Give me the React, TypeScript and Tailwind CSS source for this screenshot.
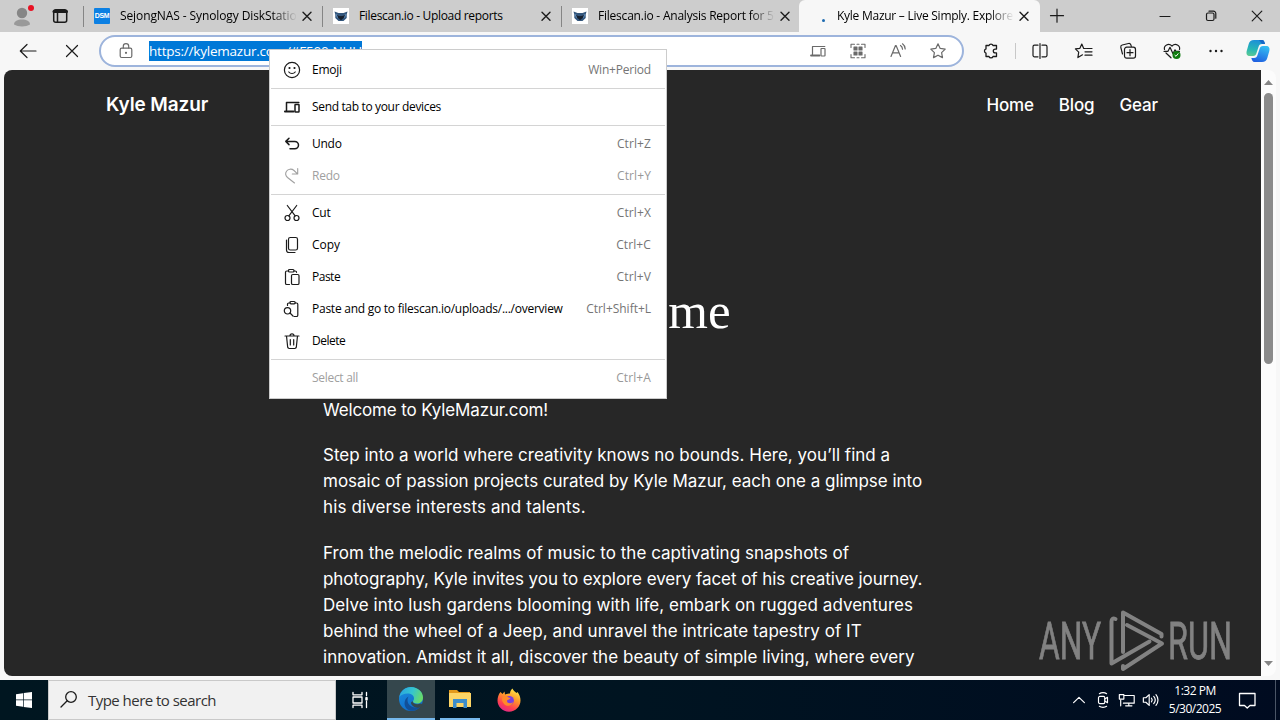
import type { ReactNode } from "react";
import clsx from "clsx";

const UI = "font-['Open_Sans','Noto_Sans',sans-serif]";

type IconProps = {
  size?: number;
  className?: string;
  width?: number;
  children: ReactNode;
};

function Icon({ size = 20, className, width = 1.2, children }: IconProps) {
  return (
    <svg
      width={size}
      height={size}
      viewBox="0 0 20 20"
      fill="none"
      stroke="currentColor"
      strokeWidth={width}
      strokeLinecap="round"
      strokeLinejoin="round"
      className={clsx("shrink-0", className)}
    >
      {children}
    </svg>
  );
}

const CloseIcon = () => (
  <Icon width={1.4}>
    <path d="M6 6.2l8 8M14 6.2l-8 8" />
  </Icon>
);

const DevicesIcon = ({ width = 1.2 }: { width?: number }) => (
  <Icon width={width}>
    <path d="M4.5 13.5V5.5h12.3" />
    <path d="M3 14.500h8.500" strokeWidth={width + 0.6} />
    <rect x="13" y="7.500" width="4" height="7.500" rx="0.5" />
  </Icon>
);

const OwlIcon = () => (
  <svg width="16" height="16" viewBox="0 0 16 16" className="shrink-0 bg-white">
    <path d="M1.500 3.500l4 1.500h5l4-1.500-.8 3v3.500L10.500 13h-5L2.300 10V6.500z" fill="#33567c" />
    <path d="M3 6.200l3.500 1.300v2l-2.500.2zM13 6.200L9.500 7.500v2l2.500.2z" fill="#6fa2d6" />
    <path d="M4 6.800l4 1.500 4-1.500-.8 2.700L8 12.300 4.800 9.500z" fill="#16202e" />
  </svg>
);

type TabProps = {
  icon: ReactNode;
  title: string;
  className: string;
  textClass: string;
  fade?: boolean;
};

function Tab({ icon, title, className, textClass, fade }: TabProps) {
  return (
    <div className={clsx("flex h-8 shrink-0 items-center", className)}>
      {icon}
      <span
        className={clsx(
          "ml-[10px] flex-1 overflow-hidden text-[12px] whitespace-nowrap text-black",
          fade && "[mask-image:linear-gradient(to_right,black_86%,transparent)]",
          textClass
        )}
      >
        {title}
      </span>
      <CloseIcon />
    </div>
  );
}

function Divider({ className }: { className?: string }) {
  return <div className={clsx("h-[21px] w-px shrink-0 bg-[#858585]", className)} />;
}

function TabStrip() {
  return (
    <div className="flex h-8 items-center bg-[#cdcdcd] text-[#1b1b1b]">
      <div className="flex w-[44px] justify-end">
        <svg width="32" height="26" viewBox="0 0 32 26">
          <circle cx="10" cy="10" r="5.200" fill="#868686" />
          <path d="M2 21.500c0-3.500 3.500-5 8-5s8 1.500 8 5c-4 2.500-12 2.500-16 0z" fill="#999" />
          <circle cx="19" cy="5" r="3" fill="#e81123" />
        </svg>
      </div>
      <div className="flex w-[32px] justify-center">
        <Icon width={1.500}>
          <rect x="3.700" y="3.700" width="13" height="12.600" rx="2" />
          <path d="M4 5.500h12.500" strokeWidth="3" />
          <path d="M7.500 6v10" />
        </Icon>
      </div>
      <Divider className="ml-[7px]" />
      <Tab
        className="ml-[10px] w-[223px]"
        textClass="tracking-[-0.1px]"
        fade
        title="SejongNAS - Synology DiskStation"
        icon={
          <span className="flex size-4 items-center justify-center rounded-[1px] bg-[#0c80e3] font-['Liberation_Sans',sans-serif] text-[7px] font-bold tracking-[-0.3px] text-white">
            DSM
          </span>
        }
      />
      <Divider className="ml-[5px]" />
      <Tab
        className="ml-[10px] w-[223px]"
        textClass="tracking-[-0.32px]"
        title="Filescan.io - Upload reports"
        icon={<OwlIcon />}
      />
      <Divider className="ml-[5px]" />
      <Tab
        className="ml-[10px] w-[223px]"
        textClass="tracking-[-0.22px]"
        fade
        title="Filescan.io - Analysis Report for 5f0a"
        icon={<OwlIcon />}
      />
      <Tab
        className="ml-[4px] w-[241px] rounded-t-[6px] bg-[#f7f7f7] pr-[6px] pl-[12px]"
        textClass="tracking-[-0.26px]"
        fade
        title="Kyle Mazur – Live Simply. Explore De"
        icon={
          <span className="flex size-4 items-end justify-center pb-[2px] pl-[8px]">
            <i className="size-[3px] rounded-full bg-[#1c6ab0]" />
          </span>
        }
      />
      <div className="flex w-[34px] justify-center">
        <Icon>
          <path d="M3.500 9.700h13M10 3.200v13" />
        </Icon>
      </div>
      <div className="ml-auto flex">
        <div className="flex w-[46px] justify-center">
          <Icon>
            <path d="M5 10.500h10" />
          </Icon>
        </div>
        <div className="flex w-[46px] justify-center">
          <Icon>
            <rect x="5.500" y="7" width="7.500" height="7.500" rx="1.500" />
            <path d="M8 5.200h4.500a2.300 2.300 0 0 1 2.300 2.300v4.700" />
          </Icon>
        </div>
        <div className="flex w-[46px] justify-center">
          <Icon>
            <path d="M5.200 5.200l9.600 9.600M14.800 5.200l-9.600 9.600" />
          </Icon>
        </div>
      </div>
    </div>
  );
}

function AddressBar() {
  return (
    <div className="flex h-[32px] w-[865px] shrink-0 items-center rounded-full border-2 border-[#9db4dc] bg-white pr-[14px] pl-[15px] text-[#6a6a6a]">
      <Icon>
        <rect x="4.200" y="7.200" width="11.600" height="9.300" rx="1.500" />
        <path d="M7.300 7V5.300a2.700 2.700 0 0 1 5.400 0V7" />
        <circle cx="10" cy="11.800" r="0.500" fill="currentColor" />
      </Icon>
      <span className="ml-[13px] h-5 w-[213px] shrink-0 overflow-hidden bg-[#0078d7] text-[13.500px] leading-5 tracking-[-0.22px] whitespace-nowrap text-white">
        https://kylemazur.com/#F500-NUU
      </span>
      <div className="ml-auto flex gap-5">
        <DevicesIcon />
        <Icon width={1.100}>
          <path d="M3 6.500V3.300h3.500M13.500 3.300H17v3.200M17 13.500v3.200h-3.500M6.500 16.700H3v-3.200M9 3.300h2M9 16.700h2" />
          <path d="M6 6h3v3H6zM11 6h3v3h-3zM6 11h3v3H6zM11 11h3v3h-3z" fill="currentColor" />
        </Icon>
        <Icon>
          <path d="M3 15.500L7.500 4.500h.6l4.500 11M4.600 11.800h6.400" />
          <path d="M12.500 4.500c1.500 1 2 2.200 2 3.700M14.500 2.800c2 1.500 2.700 3 2.700 5.200" />
        </Icon>
        <Icon>
          <path d="M10 2.800l2.200 4.600 5 .7-3.600 3.500.9 5-4.500-2.400-4.500 2.400.9-5L2.800 8.100l5-.7z" />
        </Icon>
      </div>
    </div>
  );
}

function Toolbar() {
  return (
    <div className="flex h-[38px] items-center bg-[#f7f7f7] text-[#1b1b1b]">
      <div className="flex w-[99px] gap-[24px] pl-[18px]">
        <Icon>
          <path d="M18 10H2.500M9 3.500L2.300 10 9 16.500" />
        </Icon>
        <Icon>
          <path d="M4.500 4.500l11 11M15.500 4.500l-11 11" />
        </Icon>
      </div>
      <AddressBar />
      <div className="flex w-[51px] justify-center pl-[3px]">
        <Icon width={1.300}>
          <path d="M5 4.500h3a2.100 2.100 0 0 1 4 0h3.500v3.600h-1.300a1.900 1.900 0 0 0 0 3.800h1.300v3.600H12a2.100 2.100 0 0 1-4 0H5v-3.400a2.200 2.200 0 0 1 0-4.200z" />
        </Icon>
      </div>
      <div className="h-4 w-px bg-[#c8c8c8]" />
      <div className="flex flex-1 items-center pl-[14px]">
        <Icon>
          <path d="M8 4.200H4.500a1.500 1.500 0 0 0-1.500 1.500v8.600a1.500 1.500 0 0 0 1.500 1.500H8M12 4.200h3.500A1.500 1.500 0 0 1 17 5.700v8.600a1.500 1.500 0 0 1-1.500 1.500H12M10 2.500v15" />
        </Icon>
        <Icon className="ml-[24px]">
          <path d="M11.500 7.500H9.700L7.800 3 5.900 7.300l-4.500.6 3.300 3.200-.8 5.500 4.600-2.800M12.500 7.500H18M11 10.800h7M11 14.200h7" />
        </Icon>
        <Icon className="ml-[24px]">
          <path d="M4.500 13L2.800 6.300A2 2 0 0 1 4.200 4L10.500 2.500a2 2 0 0 1 2.300 1.200l.5 1.700" />
          <rect x="6.500" y="6.200" width="11" height="11" rx="2.200" />
          <path d="M12 8.700v6M9 11.700h6" />
        </Icon>
        <Icon className="ml-[24px]">
          <path d="M2.500 8.500C1.500 4.500 6.500 1.500 10 5c3.500-3.500 8.500-.5 7.500 3.500M4 12l5 4.800M2 10.300h4l2-4 3 6.500 2-4 1 1.500h3.500" />
          <circle cx="14.500" cy="14" r="4" fill="#107c10" stroke="none" />
          <path d="M12.900 14.300l1.100 1 2.100-2.600" stroke="white" strokeWidth="1" />
        </Icon>
        <Icon className="ml-[24px]">
          <g fill="currentColor" stroke="none">
            <circle cx="4.500" cy="10" r="1.200" />
            <circle cx="10" cy="10" r="1.200" />
            <circle cx="15.500" cy="10" r="1.200" />
          </g>
        </Icon>
        <svg width="24" height="24" viewBox="0 0 24 24" className="ml-[20px] shrink-0">
          <defs>
            <linearGradient id="cpA" x1="0.500" y1="0" x2="0.300" y2="1">
              <stop offset="0" stopColor="#1d8fd8" />
              <stop offset="0.600" stopColor="#27b7b5" />
              <stop offset="1" stopColor="#5ac994" />
            </linearGradient>
            <linearGradient id="cpB" x1="0.700" y1="0" x2="0.300" y2="1">
              <stop offset="0" stopColor="#33bdf2" />
              <stop offset="1" stopColor="#1f5fe0" />
            </linearGradient>
          </defs>
          <path d="M8 1h8c2 0 2.500 2 3 4h-3c-2 0-3 1-3.500 3l-2 6c-.5 2-1.500 3-3.500 3H4c-3 0-4-2-3.300-5l2-7C3.500 2.500 5 1 8 1z" fill="url(#cpA)" />
          <path d="M16 23H8.500C6.500 23 6 21 5.300 19H8c2 0 3-1 3.500-3l2-6c.5-2 1.500-3 3.500-3h3c3 0 4 2 3.300 5l-2 7c-.8 2.500-2.300 4-5.300 4z" fill="url(#cpB)" />
          <path d="M13 1h3c2 0 2.500 2 3 4h-3z" fill="#1668c8" />
        </svg>
      </div>
    </div>
  );
}

function Page() {
  return (
    <div className="flex h-[606px] w-[1257px] flex-col overflow-hidden rounded-l-lg bg-[#272727] font-['Inter',sans-serif] text-white">
      <header className="flex h-[70px] shrink-0 items-center justify-between pr-[103px] pl-[102px]">
        <span className="pt-px text-[19px] font-semibold tracking-[-0.1px]">Kyle Mazur</span>
        <nav className="flex gap-[25px] pt-[2px] text-[17px] font-medium tracking-[-0.15px]">
          <span>Home</span>
          <span>Blog</span>
          <span>Gear</span>
        </nav>
      </header>
      <h1 className="mt-[141px] pl-[5px] text-center font-['Liberation_Serif',serif] text-[51px] leading-[60px]">
        Welcome
      </h1>
      <main className="mt-[56px] ml-[319px] text-[17px] leading-[26px] whitespace-nowrap">
        <p className="tracking-[-0.14px]">Welcome to KyleMazur.com!</p>
        <p className="mt-[19px]">
          <span className="tracking-[0.015px]">
            Step into a world where creativity knows no bounds. Here, you’ll find a
          </span>
          <br />
          <span className="tracking-[-0.015px]">
            mosaic of passion projects curated by Kyle Mazur, each one a glimpse into
          </span>
          <br />
          <span className="tracking-[0.12px]">his diverse interests and talents.</span>
        </p>
        <p className="mt-5">
          <span className="tracking-[0.03px]">
            From the melodic realms of music to the captivating snapshots of
          </span>
          <br />
          <span className="tracking-[-0.06px]">
            photography, Kyle invites you to explore every facet of his creative journey.
          </span>
          <br />
          <span className="tracking-[0.04px]">
            Delve into lush gardens blooming with life, embark on rugged adventures
          </span>
          <br />
          <span className="tracking-[0.06px]">
            behind the wheel of a Jeep, and unravel the intricate tapestry of IT
          </span>
          <br />
          <span className="tracking-[0.03px]">
            innovation. Amidst it all, discover the beauty of simple living, where every
          </span>
        </p>
      </main>
    </div>
  );
}

function Scrollbar() {
  return (
    <div className="flex w-[15px] flex-col items-center rounded-r-lg bg-[#fcfcfc] pt-[10px] pb-[10px]">
      <svg width="9" height="5" viewBox="0 0 9 5">
        <path d="M4.500 0L9 5H0z" fill="#858585" />
      </svg>
      <div className="mt-2 h-[271px] w-[9px] rounded-full bg-[#8b8b8b]" />
      <svg width="9" height="5" viewBox="0 0 9 5" className="mt-auto">
        <path d="M0 0h9L4.500 5z" fill="#858585" />
      </svg>
    </div>
  );
}

type MenuItemProps = {
  icon?: ReactNode;
  label: string;
  keys?: string;
  disabled?: boolean;
  labelClass?: string;
  keysClass?: string;
};

function MenuItem({
  icon,
  label,
  keys,
  disabled,
  labelClass = "tracking-[-0.25px]",
  keysClass = "tracking-[0.1px]",
}: MenuItemProps) {
  return (
    <div
      className={clsx(
        "flex h-8 items-center pr-[15px] pl-3",
        disabled ? "text-[#a0a0a0]" : "text-[#1b1b1b]"
      )}
    >
      <span className="flex size-5">{icon}</span>
      <span className={clsx("ml-[10px]", !disabled && "text-black", labelClass)}>{label}</span>
      <span className={clsx("ml-auto", disabled ? "text-[#989898]" : "text-[#757575]", keysClass)}>
        {keys}
      </span>
    </div>
  );
}

const MenuLine = () => <div className="mx-px my-[2px] h-px bg-[#d4d4d4]" />;

function ContextMenu() {
  return (
    <div className="absolute top-[49px] left-[269px] w-[398px] border border-[#cccccc] bg-white py-1 text-[12px] whitespace-nowrap">
      <MenuItem
        label="Emoji"
        keys="Win+Period"
        keysClass="tracking-[-0.2px]"
        icon={
          <Icon>
            <circle cx="10" cy="10" r="7.600" />
            <path d="M6.800 12c1.500 2 4.900 2 6.400 0" />
            <circle cx="7.500" cy="8" r="0.500" fill="currentColor" />
            <circle cx="12.500" cy="8" r="0.500" fill="currentColor" />
          </Icon>
        }
      />
      <MenuLine />
      <MenuItem
        label="Send tab to your devices"
        labelClass="tracking-[-0.34px]"
        icon={<DevicesIcon width={1.500} />}
      />
      <MenuLine />
      <MenuItem
        label="Undo"
        keys="Ctrl+Z"
        icon={
          <Icon width={1.500}>
            <path d="M7 4.200L3.800 7.400 7 10.600M4.200 7.400h8.600a3.700 3.700 0 0 1 0 7.400H8" />
          </Icon>
        }
      />
      <MenuItem
        label="Redo"
        keys="Ctrl+Y"
        disabled
        icon={
          <Icon width={1.100}>
            <path d="M15.700 2.500V8h-5.400M15.500 7.800L12 4.500C9.500 2.300 6 3 4.500 5.200S3.500 9.500 5.500 11.500l7 5.500" />
          </Icon>
        }
      />
      <MenuLine />
      <MenuItem
        label="Cut"
        keys="Ctrl+X"
        icon={
          <Icon>
            <circle cx="5.500" cy="15" r="2.500" />
            <circle cx="14.500" cy="15" r="2.500" />
            <path d="M5.300 2.500l7.900 10.400M14.700 2.500L6.800 12.900" />
          </Icon>
        }
      />
      <MenuItem
        label="Copy"
        keys="Ctrl+C"
        labelClass="tracking-[-0.05px]"
        icon={
          <Icon>
            <rect x="6.500" y="2.500" width="9" height="12.500" rx="1.800" />
            <path d="M4.500 5v10a2.500 2.500 0 0 0 2.500 2.500h6" />
          </Icon>
        }
      />
      <MenuItem
        label="Paste"
        keys="Ctrl+V"
        labelClass="tracking-[-0.5px]"
        icon={
          <Icon>
            <path d="M6.500 4H4.800a1.300 1.300 0 0 0-1.300 1.300v10.900a1.300 1.300 0 0 0 1.300 1.300H7.500M12 4h1.200a1.300 1.300 0 0 1 1.300 1.300" />
            <rect x="6.500" y="2.500" width="5.500" height="2.500" rx="1" />
            <rect x="9.500" y="7.500" width="7.500" height="10" rx="1.300" />
          </Icon>
        }
      />
      <MenuItem
        label="Paste and go to filescan.io/uploads/.../overview"
        keys="Ctrl+Shift+L"
        keysClass="tracking-[-0.02px]"
        icon={
          <Icon>
            <path d="M5.500 6.500V5.300A1.300 1.300 0 0 1 6.800 4H8M13 4h1.500a1.300 1.300 0 0 1 1.300 1.300v10.900a1.300 1.300 0 0 1-1.300 1.300H12" />
            <rect x="8" y="2.500" width="5.200" height="2.300" rx="1" />
            <circle cx="5.500" cy="11.800" r="3.200" />
            <path d="M8 14l3 3" />
          </Icon>
        }
      />
      <MenuItem
        label="Delete"
        labelClass="tracking-[-0.5px]"
        icon={
          <Icon>
            <path d="M3 5h14M4.500 5l1.200 11.200a1.500 1.500 0 0 0 1.500 1.300h5.600a1.500 1.500 0 0 0 1.500-1.300L15.500 5M8 4.800a2 2 0 0 1 4 0M8.300 8.500v5.500M11.700 8.500v5.500" />
          </Icon>
        }
      />
      <MenuLine />
      <MenuItem label="Select all" keys="Ctrl+A" disabled labelClass="tracking-[-0.3px]" />
    </div>
  );
}

function Watermark() {
  return (
    <svg
      width="196"
      height="66"
      viewBox="0 0 196 66"
      className="absolute top-[608px] left-[1037px] opacity-90"
    >
      <g
        fill="#8c8c8c"
        stroke="#8c8c8c"
        strokeWidth="0.800"
        fontFamily="Roboto, sans-serif"
        fontSize="52"
      >
        <text x="2" y="51" textLength="62" lengthAdjust="spacingAndGlyphs">
          ANY
        </text>
        <text x="131" y="51" textLength="64" lengthAdjust="spacingAndGlyphs">
          RUN
        </text>
      </g>
      <g fill="none" stroke="#8c8c8c" strokeWidth="4" strokeLinecap="round" strokeLinejoin="round">
        <path d="M86 44V4.500l38.500 21.500v2.500" />
        <path d="M78.500 11q-4-1.500-4 2.500v42l38-22" />
        <path d="M90 17l35 18.500-39 25.500v-3" />
      </g>
    </svg>
  );
}

function Tray() {
  return (
    <div className="ml-auto flex h-full items-center text-white">
      <div className="flex w-6 justify-center">
        <Icon size={18} width={1.300}>
          <path d="M4 13l6-6 6 6" />
        </Icon>
      </div>
      <div className="flex w-6 justify-center">
        <Icon size={18} width={1.300}>
          <rect x="5" y="6" width="7" height="8" rx="1.500" />
          <path d="M12 9l3-2v6l-3-2M6 3c2-1.500 6-1.500 8 0M6 17c2 1.500 6 1.500 8 0" />
        </Icon>
      </div>
      <div className="flex w-6 justify-center">
        <Icon size={18} width={1.300}>
          <path d="M7 5h11v8.500H6M3 10v6.500M12 13.500v3M8.500 16.500h7" />
          <rect x="1.500" y="4" width="5" height="5" />
        </Icon>
      </div>
      <div className="flex w-6 justify-center">
        <Icon size={18} width={1.300}>
          <path d="M1.500 7.500h2.800L8 4v12l-3.700-3.500H1.500zM10.500 8c1 1.200 1 2.800 0 4M13 6c2 2.300 2 5.700 0 8M15.500 4c3 3.500 3 8.500 0 12" />
        </Icon>
      </div>
      <div className="flex w-[64px] flex-col items-center text-[12px] leading-[18px] tracking-[-0.5px] whitespace-nowrap">
        <span>1:32 PM</span>
        <span>5/30/2025</span>
      </div>
      <div className="ml-[10px] flex w-[20px] justify-center">
        <Icon width={1.300}>
          <path d="M2.500 3.500h15.500v12h-5L10.200 18l-2.700-2.500h-5z" />
        </Icon>
      </div>
      <div className="mr-1 ml-[18px] h-10 w-px bg-[#4a5566]" />
    </div>
  );
}

function Taskbar() {
  return (
    <div className="flex h-10 items-center bg-linear-to-r from-[#001620] via-[#001421] to-[#000b20]">
      <div className="flex w-12 justify-center">
        <svg width="16" height="16" viewBox="0 0 16 16" fill="white">
          <path d="M0 2.300L7 1.200v6.400H0zM7.700 1.100L16 0v7.600H7.700zM0 8.300h7v6.500l-7-1.100zM7.700 8.300H16V16l-8.300-1.100z" />
        </svg>
      </div>
      <div className="flex h-full w-[288px] items-center border border-[#c9c9c9] bg-[#f1f1f1] pl-[10px]">
        <Icon className="text-[#1b1b1b]" width={1.300}>
          <circle cx="12" cy="7" r="5.300" />
          <path d="M8.200 10.800L2 17" />
        </Icon>
        <span className="ml-[9px] text-[15px] tracking-[-0.53px] text-[#333]">Type here to search</span>
      </div>
      <div className="flex w-[51px] justify-center pr-[3px]">
        <Icon className="text-white" width={1.300}>
          <path d="M3 2.500v2.300h9V2.500M3 17.500v-2.300h9v2.300M3 7h9v6H3zM16.500 2.500v3M16.500 11.500v6" />
          <path d="M16.500 8v1.500" strokeWidth="2.500" />
        </Icon>
      </div>
      <div className="flex h-full w-12 items-center justify-center border-b-2 border-[#76b9ed] bg-[#35474d]">
        <svg width="24" height="24" viewBox="0 0 24 24">
          <defs>
            <linearGradient id="edTop" x1="0" y1="0.300" x2="1" y2="0.600">
              <stop offset="0" stopColor="#2aa5e0" />
              <stop offset="0.500" stopColor="#35c5cf" />
              <stop offset="1" stopColor="#6bdc63" />
            </linearGradient>
            <linearGradient id="edBot" x1="0" y1="0" x2="0.600" y2="1">
              <stop offset="0" stopColor="#1b8fe0" />
              <stop offset="1" stopColor="#0f6ac8" />
            </linearGradient>
          </defs>
          <circle cx="12" cy="12" r="12" fill="url(#edBot)" />
          <path d="M.3 10C1.500 4 6.300 0 12 0c7 0 12 5.200 12 10.500 0 4-3 6-6 6-2.500 0-4-1-4-2s1-1.300 1-3.300c0-2.700-3-4.700-6.500-4.700C5 6.500 2 8 .3 10z" fill="url(#edTop)" />
          <path d="M9.500 9.500c-2 3-1 8 3 10 3.500 1.800 7 .8 9.500-1-4 6.500-11 6.500-14.500 3-3.500-4-2-10 2-12z" fill="#124f98" />
          <path d="M13.500 14c0 2.500 3.500 4.200 8.500 2.500l2 1-2 2.500c-5 2-10-1-10-4.500z" fill="#35474d" />
        </svg>
      </div>
      <div className="ml-[5px] flex h-full w-10 items-center justify-center border-b-2 border-[#76b9ed]">
        <svg width="22" height="20" viewBox="0 0 22 20">
          <path d="M0 1h8l2 2h11v5H0z" fill="#e39a1c" />
          <path d="M0 4h22v14H0z" fill="#fdd566" />
          <path d="M4 10h14v9h-3.500v-5h-7v5H4z" fill="#3d8ecb" />
        </svg>
      </div>
      <div className="ml-[5px] flex w-12 items-center justify-center">
        <svg width="24" height="24" viewBox="0 0 24 24">
          <defs>
            <linearGradient id="fx" x1="0.800" y1="0" x2="0.300" y2="1">
              <stop offset="0" stopColor="#fff04a" />
              <stop offset="0.400" stopColor="#ff9a2a" />
              <stop offset="0.750" stopColor="#ff4050" />
              <stop offset="1" stopColor="#e0268a" />
            </linearGradient>
          </defs>
          <path d="M3.500 4l2 2 2-2.500.5 3c2-1 4-1 5-1 0-2 1-4 2.500-5 .5 2 2.500 3 4 4.500l1-1c2 2.500 3 5.500 3 8.500 0 6-5 11.200-11.500 11.200S.5 18.500.5 12.500c0-3 1-6.500 3-8.500z" fill="url(#fx)" />
          <circle cx="12.300" cy="12.500" r="4.600" fill="#7a3fe0" />
          <path d="M5.500 9c2-1.500 4.500-1 6 .5l2 .5c-1 2-3.500 1.500-3.500 3 0 2.500 4 3 6 1-1 4-6 5-8.500 2.500S4.500 11.500 5.500 9z" fill="#ff8a2a" />
        </svg>
      </div>
      <Tray />
    </div>
  );
}

export default function App() {
  return (
    <div className={clsx("relative h-[720px] w-[1280px] overflow-hidden bg-[#f7f7f7]", UI)}>
      <TabStrip />
      <Toolbar />
      <div className="flex h-[610px] px-1 pb-1">
        <Page />
        <Scrollbar />
      </div>
      <Taskbar />
      <ContextMenu />
      <Watermark />
    </div>
  );
}
